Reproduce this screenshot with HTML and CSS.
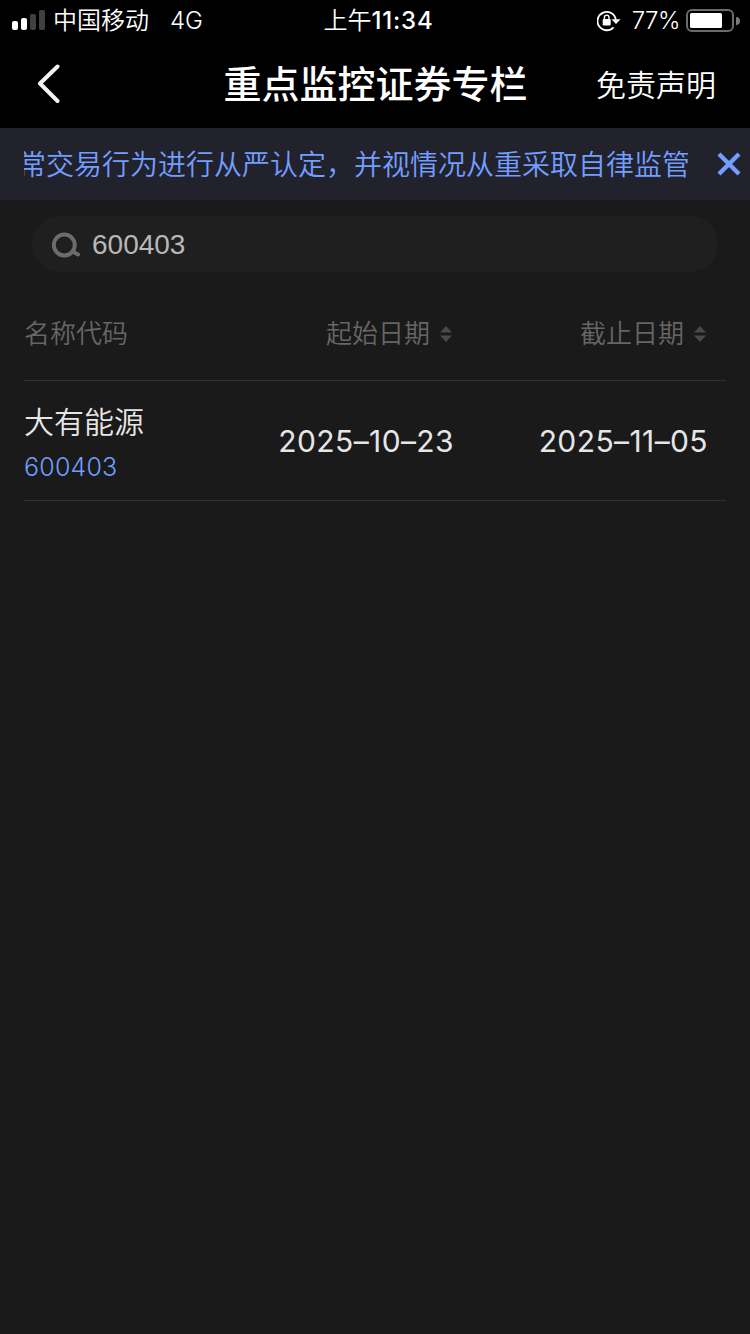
FILE: index.html
```html
<!DOCTYPE html>
<html lang="zh-CN">

<head>
    <meta charset="UTF-8">
    <meta name="viewport" content="width=device-width, initial-scale=1.0">
    <title>重点监控证券专栏</title>
    <link rel="stylesheet" href="styles.css">
</head>

<body>
    <!-- 状态栏 -->
    <div class="status">
        <div class="status-left">
            <svg class="signal" width="33" height="20" viewBox="0 0 33 20">
                <rect x="0" y="11" width="6" height="9" rx="2" fill="#fff" />
                <rect x="9" y="8" width="6" height="12" rx="2" fill="#fff" />
                <rect x="18" y="4" width="6" height="16" rx="2" fill="#404040" />
                <rect x="27" y="0" width="6" height="20" rx="2" fill="#404040" />
            </svg>
            <span class="carrier">中国移动</span>
            <span class="network">4G</span>
        </div>
        <div class="status-time">上午<b>11:34</b></div>
        <div class="status-right">
            <svg class="lock" width="24" height="22" viewBox="0 0 24 22">
                <path d="M18.800 9.500A9.200 9.200 0 1 0 16.500 17.300" fill="none" stroke="#fff" stroke-width="1.8" />
                <path d="M14.500 9.300H23.500L19 14z" fill="#fff" />
                <rect x="5.700" y="9" width="8" height="6.500" rx="1" fill="#fff" />
                <path d="M7.400 10V7.400a2.300 2.300 0 0 1 4.600 0V10" fill="none" stroke="#fff" stroke-width="1.400" />
            </svg>
            <span class="percent">77%</span>
            <svg class="battery" width="54" height="24" viewBox="0 0 54 24">
                <rect x="1" y="1" width="46" height="21" rx="5" fill="none" stroke="#6b6b6b" stroke-width="2" />
                <rect x="4" y="4" width="32" height="15" rx="1.5" fill="#fff" />
                <path d="M50 8a4 4 0 0 1 0 8z" fill="#7a7a7a" />
            </svg>
        </div>
    </div>

    <!-- 标题栏 -->
    <div class="header">
        <a href="javascript:;" class="back">
            <svg width="24" height="40" viewBox="0 0 24 40">
                <path d="M20.500 2.500L3 19.500l17.500 17.500" fill="none" stroke="#f2f2f2" stroke-width="4" stroke-linecap="round" stroke-linejoin="round" />
            </svg>
        </a>
        <h1 class="header-title">重点监控证券专栏</h1>
        <a href="javascript:;" class="disclaimer">免责声明</a>
    </div>

    <!-- 滚动公告 -->
    <div class="notice" id="notice">
        <div class="notice-content">
            <p class="notice-text">常交易行为进行从严认定，并视情况从重采取自律监管</p>
        </div>
        <a href="javascript:;" id="closeBtn" class="notice-close">
            <svg width="24" height="24" viewBox="0 0 24 24">
                <path d="M2 2l20 20M22 2L2 22" stroke="#719eff" stroke-width="4.400" />
            </svg>
        </a>
    </div>

    <!-- 搜索框 -->
    <div class="search">
        <svg width="30" height="28" viewBox="0 0 30 28">
            <circle cx="12.300" cy="15" r="10.500" fill="none" stroke="#6c6c6c" stroke-width="4" />
            <path d="M20.500 21.500L26 24.500" stroke="#6c6c6c" stroke-width="4" stroke-linecap="round" />
        </svg>
        <span class="search-text">600403</span>
    </div>

    <!-- 列表 -->
    <div class="list">
        <div class="row list-head">
            <div>名称代码</div>
            <div class="sort">起始日期
                <svg width="12" height="16" viewBox="0 0 12 16">
                    <path d="M6 0l6 6.500H0zM0 9.500h12L6 16z" fill="#4a4a4a" />
                </svg>
            </div>
            <div class="sort">截止日期
                <svg width="12" height="16" viewBox="0 0 12 16">
                    <path d="M6 0l6 6.500H0zM0 9.500h12L6 16z" fill="#4a4a4a" />
                </svg>
            </div>
        </div>
        <div class="row list-item">
            <div>
                <p class="name">大有能源</p>
                <p class="code">600403</p>
            </div>
            <div class="date">2025–10–23</div>
            <div class="date">2025–11–05</div>
        </div>
    </div>

    <script>
        var notice = document.querySelector('#notice');
        var closeBtn = document.querySelector('#closeBtn');

        // 点击关闭公告
        closeBtn.addEventListener('click', function () {
            notice.style.display = 'none';
        })
    </script>
</body>

</html>
```
FILE: styles.css
```css
* {
    box-sizing: border-box;
}

body,
h1,
p {
    margin: 0;
    padding: 0;
}

body {
    min-height: 1334px;
    background: #1a1a1a;
    color: #e6e6e6;
    font-family: Inter, "Noto Sans CJK SC", sans-serif;
    font-weight: 350;
}

a {
    color: #fff;
    text-decoration: none;
}

svg {
    display: block;
    flex-shrink: 0;
}

.status {
    display: grid;
    grid-template-columns: 1fr auto 1fr;
    align-items: center;
    height: 40px;
    padding: 2px 10px 0 12px;
    background: #000;
    color: #fff;
    font-size: 24px;
    line-height: 38px;
}

.status-left,
.status-right {
    display: flex;
    align-items: center;
}

.status-right {
    justify-content: flex-end;
}

.signal {
    margin-top: -2px;
}

.lock,
.battery {
    margin-top: -1px;
}

.carrier {
    margin-left: 8px;
}

.network {
    margin-left: 21px;
    font-size: 24px;
}

.status-time {
    padding-left: 5px;
}

.status-time b {
    font-weight: 550;
    font-size: 24px;
    letter-spacing: 0.8px;
}

.percent {
    margin: 0 6px 0 11px;
    font-size: 24px;
    letter-spacing: -0.5px;
}

.header {
    display: grid;
    grid-template-columns: 1fr auto 1fr;
    align-items: center;
    height: 88px;
    padding: 0 34px 0 37px;
    background: #000;
}

.header-title {
    margin-left: -2px;
    color: #fff;
    font-size: 38px;
    font-weight: 500;
    line-height: 86px;
}

.disclaimer {
    justify-self: end;
    padding-bottom: 2px;
    font-size: 30px;
}

.notice {
    display: flex;
    align-items: center;
    height: 72px;
    padding: 0 9px 0 24px;
    background: #22222c;
}

.notice-content {
    display: flex;
    justify-content: flex-end;
    width: 664px;
    overflow: hidden;
}

.notice-text {
    margin-right: -2px;
    padding-top: 3px;
    color: #719eff;
    font-size: 28px;
    line-height: 69px;
    white-space: nowrap;
}

.notice-close {
    margin-left: auto;
}

.search {
    display: flex;
    align-items: center;
    height: 56px;
    margin: 16px 32px 0;
    padding-left: 20px;
    border-radius: 28px;
    background: #1f1f1f;
}

.search-text {
    margin-left: 10px;
    padding-top: 2px;
    color: #b8b8b8;
    font-family: "Liberation Sans", sans-serif;
    font-size: 28px;
}

.list {
    margin: 12px 24px 0;
}

.row {
    display: grid;
    grid-template-columns: 176px 254px 254px;
    align-items: center;
    border-bottom: 1px solid #303030;
}

.list-head {
    height: 97px;
    padding-bottom: 1px;
    color: #666;
    font-size: 26px;
}

.sort {
    display: flex;
    align-items: center;
    justify-content: flex-end;
    gap: 10px;
    padding-right: 2px;
}

.sort svg {
    margin-top: 4px;
}

.list-item {
    height: 120px;
}

.name {
    padding-top: 8px;
    font-size: 30px;
    line-height: 44px;
}

.code {
    color: #719eff;
    font-size: 25px;
    letter-spacing: 0.2px;
    line-height: 46px;
}

.date {
    font-size: 30px;
    font-weight: 370;
    font-feature-settings: "calt" 0;
    letter-spacing: 0.4px;
    text-align: right;
}
```
